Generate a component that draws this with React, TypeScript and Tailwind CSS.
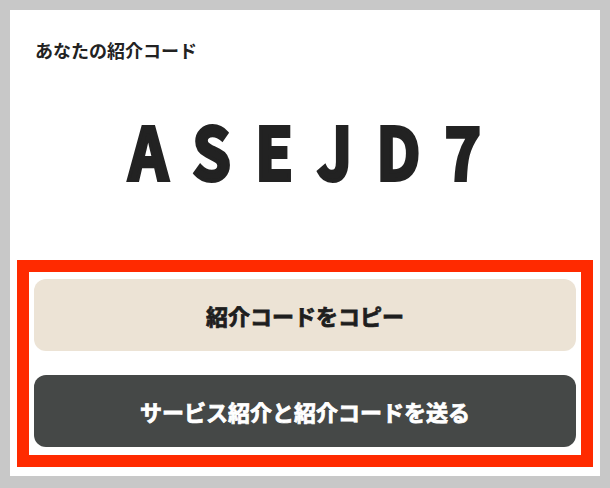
export default function App() {
  return (
    <div className="min-h-[488px] w-full bg-[#c8c8c8] px-[10px] pt-[10px] pb-[12px]">
      <div
        className="flex flex-col bg-white px-[7px] pt-[27px] pb-[9px]"
        style={{ fontFamily: '"Noto Sans CJK JP", "Noto Sans", sans-serif' }}
      >
        <p className="pl-[18px] text-[18px] leading-[27px] font-semibold text-[#222]">
          あなたの紹介コード
        </p>

        <div className="mt-[47px] flex h-[76px] items-center justify-center">
          <span className="inline-block origin-center scale-x-[0.85] pl-[0.4em] text-[72px] leading-[76px] font-bold tracking-[0.4em] text-[#222] [-webkit-text-stroke:4px_#222222]">
            ASEJD7
          </span>
        </div>

        <div className="mt-[73px] flex flex-col gap-[24px] border-[12px] border-[#ff2a00] px-[5px] pt-[7px] pb-[8px]">
          <button
            type="button"
            className="flex h-[72px] items-center justify-center rounded-[12px] bg-[#ece3d5] text-[22px] font-bold text-[#1e1e1e] [-webkit-text-stroke:0.8px_#1e1e1e]"
          >
            紹介コードをコピー
          </button>
          <button
            type="button"
            className="flex h-[72px] items-center justify-center rounded-[12px] bg-[#454847] text-[22px] font-bold text-white [-webkit-text-stroke:0.8px_#ffffff]"
          >
            サービス紹介と紹介コードを送る
          </button>
        </div>
      </div>
    </div>
  );
}
